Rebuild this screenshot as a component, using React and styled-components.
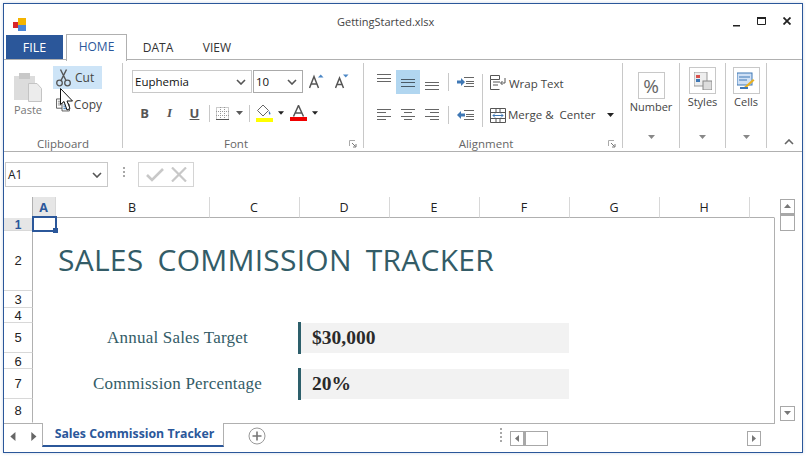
import React from 'react'
import styled, { createGlobalStyle } from 'styled-components'

const BLUE = '#2b579a'
const LINE = '#b0b0b0'
const ICON = '#5a5a5a'

const COLUMNS = [
  { name: 'A', active: true },
  { name: 'B' },
  { name: 'C' },
  { name: 'D' },
  { name: 'E' },
  { name: 'F' },
  { name: 'G' },
  { name: 'H' },
  { name: '' },
]

const ROWS = [
  { name: '1', narrow: true },
  { name: '2' },
  { name: '3', narrow: true },
  { name: '4', narrow: true },
  { name: '5' },
  { name: '6', narrow: true },
  { name: '7' },
  { name: '8' },
]

const GlobalStyle = createGlobalStyle`
  html, body {
    margin: 0;
    padding: 0;
    background: #fff;
  }
  body {
    width: 806px;
    height: 456px;
    overflow: hidden;
    font-family: "Open Sans", "Liberation Sans", sans-serif;
  }
  * {
    box-sizing: border-box;
  }
`

const Window = styled.div`
  position: relative;
  display: flex;
  flex-direction: column;
  width: 800px;
  height: 450px;
  margin: 3px;
  border: 1px solid ${BLUE};
  background: #fff;
  box-shadow: 0 0 3px rgba(43, 87, 154, 0.25);
`

const TitleBar = styled.div`
  display: flex;
  height: 31px;
  padding-left: 9px;
`

const AppIcon = styled.svg`
  margin-top: 14px;
  flex: none;
`

const Title = styled.div`
  margin: 10px 0 0 310px;
  font-size: 11px;
  line-height: 16px;
  color: #444;
`

const WindowButtons = styled.div`
  display: flex;
  margin-left: auto;
  padding: 13px 11px 0 0;
  gap: 17px;
`

const RibbonTabs = styled.div`
  display: flex;
  height: 25px;
  padding-left: 2px;
`

const FileTab = styled.div`
  width: 57px;
  height: 24px;
  margin-right: 3px;
  background: ${BLUE};
  color: #fff;
  font-size: 12.5px;
  line-height: 25px;
  text-align: center;
`

const RibbonTab = styled.div`
  position: relative;
  z-index: 1;
  width: ${p => p.$width}px;
  height: ${p => (p.$active ? 27 : 24)}px;
  margin-top: ${p => (p.$active ? -1 : 0)}px;
  border: 1px solid ${p => (p.$active ? LINE : 'transparent')};
  border-bottom: ${p => (p.$active ? 'none' : '1px solid transparent')};
  background: ${p => (p.$active ? '#fff' : 'transparent')};
  color: ${p => (p.$active ? BLUE : '#333')};
  font-size: 12px;
  line-height: 24px;
  text-align: center;
`

const Ribbon = styled.div`
  display: flex;
  height: 93px;
  margin-top: -1px;
  padding-top: 3px;
  border-top: 1px solid ${LINE};
  border-bottom: 1px solid ${LINE};
`

const Group = styled.div`
  display: flex;
  flex-direction: column;
  flex: none;
  width: ${p => p.$width}px;
  height: 85px;
  border-right: 1px solid #c8c8c8;
`

const GroupBody = styled.div`
  display: flex;
  flex: 1;
  min-height: 0;
  padding: ${p => p.$padding || '0'};
`

const GroupFooter = styled.div`
  display: flex;
  align-items: center;
  height: 16px;
  margin-bottom: -4px;
`

const GroupLabel = styled.div`
  flex: 1;
  font-size: 11.5px;
  line-height: 16px;
  color: #666;
  text-align: center;
`

const Launcher = styled.svg`
  flex: none;
  margin-right: 6px;
`

const PasteColumn = styled.div`
  display: flex;
  flex-direction: column;
  align-items: center;
  width: 28px;
  margin-right: 11px;
  padding-top: 10px;
`

const PasteLabel = styled.div`
  font-size: 11px;
  line-height: 16px;
  color: #777;
`

const ClipboardColumn = styled.div`
  display: flex;
  flex-direction: column;
  gap: 4px;
  padding-top: 3px;
`

const ClipboardButton = styled.div`
  display: flex;
  align-items: center;
  gap: 4px;
  width: 49px;
  height: 23px;
  padding-left: 3px;
  background: ${p => (p.$hover ? '#cde4f7' : 'transparent')};
  font-size: 12px;
  color: #444;
`

const Cursor = styled.svg`
  position: absolute;
  left: 52px;
  top: 80px;
  z-index: 3;
`

const Stack = styled.div`
  display: flex;
  flex-direction: column;
  gap: ${p => p.$gap}px;
`

const Row = styled.div`
  display: flex;
  align-items: center;
  height: ${p => p.$height}px;
`

const Combo = styled.div`
  display: flex;
  align-items: center;
  justify-content: space-between;
  width: ${p => p.$width}px;
  height: ${p => p.$height || 23}px;
  margin-right: 1px;
  padding: 0 5px 0 2px;
  border: 1px solid ${p => p.$border || '#c8c8c8'};
  background: #fff;
  font-size: 11.5px;
  color: #111;
`

const Slot = styled.div`
  display: flex;
  align-items: center;
  justify-content: center;
  flex: none;
  width: ${p => p.$width}px;
  height: ${p => p.$height || 20}px;
  background: ${p => (p.$selected ? '#b1d6f0' : 'transparent')};
`

const StyleLetter = styled.span`
  font-family: ${p => (p.$italic ? '"Liberation Serif", serif' : '"Open Sans", sans-serif')};
  font-size: 13px;
  font-weight: 700;
  font-style: ${p => (p.$italic ? 'italic' : 'normal')};
  text-decoration: ${p => (p.$under ? 'underline' : 'none')};
  color: #555;
`

const Separator = styled.div`
  flex: none;
  width: 1px;
  height: ${p => p.$height}px;
  margin: ${p => p.$margin || '0'};
  background: #c8c8c8;
`

const ActionRow = styled.div`
  display: flex;
  align-items: center;
  height: 24px;
  padding-left: 7px;
  font-size: 11.5px;
  color: #444;
  white-space: pre;
`

const ActionText = styled.span`
  margin: ${p => p.$margin};
`

const ActionCaret = styled.svg`
  margin-left: 11px;
`

const BigCommand = styled.div`
  display: flex;
  flex-direction: column;
  align-items: center;
  width: 100%;
  padding-top: ${p => p.$top}px;
  font-size: 11px;
  line-height: 16px;
  color: #444;
`

const BigButton = styled.div`
  display: flex;
  align-items: center;
  justify-content: center;
  width: 27px;
  height: 27px;
  border: 1px solid #c8c8c8;
  font-size: 19px;
  color: #666;
`

const CaretFooter = styled.div`
  display: flex;
  justify-content: center;
  height: 14px;
`

const Collapse = styled.div`
  display: flex;
  flex: 1;
  align-items: flex-end;
  justify-content: center;
  padding: 0 0 6px 8px;
`

const FormulaBar = styled.div`
  display: flex;
  align-items: flex-start;
  height: 45px;
  padding: 10px 0 0 1px;
`

const Dots = styled.div`
  display: flex;
  flex-direction: column;
  gap: 2px;
  flex: none;
  margin: ${p => p.$margin};
`

const Dot = styled.i`
  display: block;
  width: 2px;
  height: 2px;
  background: #a8a8a8;
`

const NameBoxText = styled.span`
  font-size: 12px;
  color: #222;
`

const ConfirmBox = styled.div`
  display: flex;
  align-items: center;
  justify-content: space-around;
  width: 56px;
  height: 25px;
  padding: 0 3px;
  border: 1px solid #d4d4d4;
`

const SheetArea = styled.div`
  display: flex;
  height: 226px;
`

const Grid = styled.div`
  display: grid;
  grid-template-columns: 29px 23px 154px 90px 90px 90px 90px 90px 90px 25px;
  grid-template-rows: 21px 13px 60px 17px 15px 30px 16px 30px 24px;
  width: 771px;
  border-right: 1px solid ${LINE};
`

const Corner = styled.div`
  border-right: 1px solid ${LINE};
`

const ColumnHeader = styled.div`
  display: flex;
  align-items: center;
  justify-content: center;
  padding-right: 1px;
  border-right: 1px solid ${p => (p.$last ? 'transparent' : '#d8d8d8')};
  border-bottom: 1px solid ${LINE};
  background: ${p => (p.$active ? '#e6e6e6' : '#fff')};
  color: ${p => (p.$active ? BLUE : '#222')};
  font-size: 12.5px;
  font-weight: ${p => (p.$active ? 700 : 400)};
`

const RowHeader = styled.div`
  grid-column: 1;
  grid-row: ${p => p.$row};
  display: flex;
  align-items: center;
  justify-content: center;
  padding-top: ${p => (p.$narrow ? 2 : 0)}px;
  border-right: 1px solid ${LINE};
  border-bottom: 1px solid ${p => (p.$last ? 'transparent' : '#d8d8d8')};
  background: ${p => (p.$active ? '#e6e6e6' : '#fff')};
  color: ${p => (p.$active ? BLUE : '#222')};
  font-family: "Liberation Sans", sans-serif;
  font-size: ${p => (p.$active ? 12 : 13)}px;
  font-weight: ${p => (p.$active ? 700 : 400)};
  line-height: 12px;
`

const ActiveCell = styled.div`
  position: relative;
  grid-column: 2;
  grid-row: 2;
`

const Selection = styled.div`
  position: absolute;
  inset: -2px -1px -1px -1px;
  border: 2px solid ${BLUE};
  pointer-events: none;
`

const FillHandle = styled.div`
  position: absolute;
  right: -3px;
  bottom: -3px;
  width: 5px;
  height: 5px;
  background: ${BLUE};
`

const SheetTitle = styled.div`
  grid-column: 3 / 11;
  grid-row: 3;
  display: flex;
  align-items: center;
  padding: 0 0 4px 2px;
  font-family: "Open Sans", sans-serif;
  font-size: 30px;
  letter-spacing: 0.25px;
  color: #335c67;
  word-spacing: 6px;
  white-space: nowrap;
`

const FieldLabel = styled.div`
  grid-column: 3 / 5;
  grid-row: ${p => p.$row};
  display: flex;
  align-items: center;
  justify-content: center;
  padding-right: 1px;
  font-family: "Liberation Serif", serif;
  font-size: 17px;
  letter-spacing: 0.2px;
  color: #335c67;
`

const FieldValue = styled.div`
  position: relative;
  grid-column: 5 / 8;
  grid-row: ${p => p.$row};
  display: flex;
  align-items: center;
  margin-right: 1px;
  padding-left: 12px;
  background: #f2f2f2;
  font-family: "Liberation Serif", serif;
  font-size: 19.5px;
  font-weight: 700;
  color: #2a2a2a;
  &::before {
    content: '';
    position: absolute;
    left: -2px;
    top: -1px;
    bottom: -1px;
    width: 3px;
    background: #2d5f6b;
  }
`

const VerticalScroll = styled.div`
  display: flex;
  flex-direction: column;
  align-items: center;
  flex: 1;
  padding: 2px 2px 2px 0;
`

const ScrollButton = styled.div`
  display: flex;
  align-items: center;
  justify-content: center;
  flex: none;
  width: ${p => p.$width || 15}px;
  height: ${p => p.$height || 15}px;
  border: 1px solid #a8a8a8;
  background: #fff;
`

const VerticalThumb = styled.div`
  width: 15px;
  height: 17px;
  margin-bottom: auto;
  border: 1px solid #a8a8a8;
  border-top-width: 2px;
`

const TabBar = styled.div`
  display: flex;
  height: 29px;
`

const TabNav = styled.div`
  display: flex;
  align-items: center;
  justify-content: space-between;
  width: 38px;
  height: 24px;
  padding: 2px 3px 0 5px;
  border-top: 1px solid ${LINE};
`

const SheetTab = styled.div`
  width: 182px;
  height: 24px;
  padding-left: 3px;
  border: 1px solid ${LINE};
  border-top: none;
  border-bottom: 2px solid ${BLUE};
  color: ${BLUE};
  font-size: 12.3px;
  font-weight: 700;
  line-height: 22px;
  text-align: center;
`

const TabStrip = styled.div`
  display: flex;
  align-items: flex-start;
  width: 551px;
  border-top: 1px solid ${LINE};
`

const AddSheet = styled.svg`
  margin: 3px 0 0 24px;
  flex: none;
`

const HorizontalScroll = styled.div`
  display: flex;
  flex: none;
  width: 251px;
  margin: 7px 0 0 8px;
`

const HorizontalThumb = styled.div`
  width: 24px;
  height: 15px;
  margin-right: auto;
  border: 1px solid #a8a8a8;
  border-left-width: 2px;
`

const Triangle = ({ dir, size = 7, color = ICON }) => {
  const points = {
    down: '0,1 7,1 3.5,5',
    up: '0,5 7,5 3.5,1',
    left: '5,0 5,7 1,3.5',
    right: '1,0 1,7 5,3.5',
  }
  return (
    <svg width={size} height={size} viewBox="0 0 7 7">
      <polygon points={points[dir]} fill={color} />
    </svg>
  )
}

const Chevron = () => (
  <svg width="10" height="6" viewBox="0 0 10 6">
    <path d="M1 1l4 4 4-4" fill="none" stroke="#555" strokeWidth="1.6" />
  </svg>
)

const Lines = ({ rows, color = '#666', width = 14, height = 14 }) => (
  <svg width={width} height={height} viewBox={`0 0 ${width} ${height}`}>
    {rows.map(([x, y, w]) => (
      <rect key={y} x={x} y={y} width={w} height="1" fill={color} />
    ))}
  </svg>
)

const DialogLauncher = () => (
  <Launcher width="8" height="8" viewBox="0 0 8 8">
    <path d="M0.5 6V0.5H6" fill="none" stroke="#aaa" />
    <path d="M3 3l3.5 3.5M7 4v3H4" fill="none" stroke="#777" />
  </Launcher>
)

const Indent = ({ flip }) => (
  <svg width="17" height="12" viewBox="0 0 17 12">
    <path d="M7 1.5h10M9 5.5h8M9 7.5h8M7 10.5h10" stroke="#666" />
    {flip
      ? <path d="M0 6l4-4v2.5h4v3H4V10z" fill="#3f78b5" />
      : <path d="M8 6L4 2v2.5H0v3h4V10z" fill="#3f78b5" />}
  </svg>
)

const Cell = ({ children, active, last }) => (
  <ColumnHeader $active={active} $last={last}>{children}</ColumnHeader>
)

const Clipboard = () => (
  <Group $width={119}>
    <GroupBody $padding="0 0 0 10px">
      <PasteColumn>
        <svg width="28" height="29" viewBox="0 0 28 29">
          <rect x="0" y="3" width="21" height="24" fill="#dcdcdc" />
          <rect x="5" y="0" width="11" height="6" fill="#c8c8c8" />
          <path d="M14.5 10.5H23l4.5 5v13h-13z" fill="#ececec" stroke="#c4c4c4" />
        </svg>
        <PasteLabel>Paste</PasteLabel>
      </PasteColumn>
      <ClipboardColumn>
        <ClipboardButton $hover>
          <svg width="15" height="18" viewBox="0 0 15 18">
            <circle cx="3.5" cy="14" r="2.8" fill="none" stroke="#555" strokeWidth="1.3" />
            <circle cx="11.5" cy="14" r="2.8" fill="none" stroke="#555" strokeWidth="1.3" />
            <path d="M5 11.5L10.5 0.5M10 11.5L4.5 0.5" stroke="#555" strokeWidth="1.4" />
          </svg>
          <span>Cut</span>
        </ClipboardButton>
        <ClipboardButton>
          <svg width="15" height="15" viewBox="0 0 15 15">
            <path d="M0.5 1.5h7v10h-7z" fill="#fff" stroke="#555" />
            <path d="M2 4h4M2 6h4M2 8h4" stroke="#888" />
            <path d="M6.5 4.5h5l3 3v7h-8z" fill="#fff" stroke="#555" />
            <path d="M8 8h5M8 10h5M8 12h5" stroke="#2f74b8" />
          </svg>
          <span>Copy</span>
        </ClipboardButton>
      </ClipboardColumn>
    </GroupBody>
    <GroupFooter>
      <GroupLabel>Clipboard</GroupLabel>
    </GroupFooter>
  </Group>
)

const Font = () => (
  <Group $width={241}>
    <GroupBody $padding="7px 0 0 9px">
      <Stack $gap={10}>
        <Row $height={23}>
          <Combo $width={120}>Euphemia<Chevron /></Combo>
          <Combo $width={50} $border="#aaa">10<Chevron /></Combo>
          <Slot $width={25}>
            <svg width="15" height="15" viewBox="0 0 15 15">
              <path d="M0.5 14L5 2.5 9.5 14M2 10h6" fill="none" stroke="#555" strokeWidth="1.5" />
              <polygon points="9,3.5 14.5,3.5 11.75,0.5" fill="#4a86c5" />
            </svg>
          </Slot>
          <Slot $width={25}>
            <svg width="14" height="15" viewBox="0 0 14 15">
              <path d="M0.5 14L4.5 4 8.5 14M2 10.5h5" fill="none" stroke="#555" strokeWidth="1.5" />
              <polygon points="8,0.5 13.5,0.5 10.75,3.5" fill="#4a86c5" />
            </svg>
          </Slot>
        </Row>
        <Row $height={20}>
          <Slot $width={25}><StyleLetter>B</StyleLetter></Slot>
          <Slot $width={25}><StyleLetter $italic>I</StyleLetter></Slot>
          <Slot $width={25}><StyleLetter $under>U</StyleLetter></Slot>
          <Separator $height={17} $margin="0 0 0 2px" />
          <Slot $width={24}>
            <svg width="13" height="13" viewBox="0 0 13 13">
              <path d="M0.5 0.5h12v12h-12zM4.5 0v13M8.5 0v13M0 4.5h13M0 8.5h13" fill="none" stroke="#999" strokeDasharray="1 1" />
              <path d="M0 12.5h13" stroke="#555" />
            </svg>
          </Slot>
          <Slot $width={10}><Triangle dir="down" /></Slot>
          <Separator $height={17} $margin="0 0 0 5px" />
          <Slot $width={28}>
            <svg width="17" height="18" viewBox="0 0 17 18">
              <path d="M7 1l5.5 5.5L7 12 1.5 6.5z" fill="#fff" stroke="#666" />
              <path d="M13 7c1.5 2 2 3 1 3.6S12.5 9 13 7z" fill="#3f78b5" />
              <rect x="0" y="14" width="17" height="4" fill="#ffff00" />
            </svg>
          </Slot>
          <Slot $width={6}><Triangle dir="down" color="#222" /></Slot>
          <Slot $width={28}>
            <svg width="17" height="16" viewBox="0 0 17 16">
              <path d="M3.5 11.5L8.5 0.5l5 11M5 8h7" fill="none" stroke="#555" strokeWidth="1.5" />
              <rect x="0" y="12" width="17" height="4" fill="#f00000" />
            </svg>
          </Slot>
          <Slot $width={6}><Triangle dir="down" color="#222" /></Slot>
        </Row>
      </Stack>
    </GroupBody>
    <GroupFooter>
      <GroupLabel>Font</GroupLabel>
      <DialogLauncher />
    </GroupFooter>
  </Group>
)

const Alignment = () => (
  <Group $width={259}>
    <GroupBody $padding="7px 0 0 8px">
      <Stack $gap={9}>
        <Row $height={24}>
          <Slot $width={24} $height={24}>
            <Lines rows={[[0, 1, 14], [0, 5, 14], [0, 8, 14]]} height={18} />
          </Slot>
          <Slot $width={24} $height={24} $selected>
            <Lines rows={[[0, 6, 14], [0, 9, 14], [0, 13, 14]]} height={18} color="#4a5a66" />
          </Slot>
          <Slot $width={24} $height={24}>
            <Lines rows={[[0, 9, 14], [0, 12, 14], [0, 16, 14]]} height={18} />
          </Slot>
          <Separator $height={18} $margin="0 0 0 4px" />
          <Slot $width={33} $height={24}><Indent /></Slot>
        </Row>
        <Row $height={24}>
          <Slot $width={24} $height={24}>
            <Lines rows={[[0, 1, 14], [0, 4, 9], [0, 8, 14], [0, 11, 9]]} />
          </Slot>
          <Slot $width={24} $height={24}>
            <Lines rows={[[0, 1, 14], [3, 4, 8], [0, 8, 14], [3, 11, 8]]} />
          </Slot>
          <Slot $width={24} $height={24}>
            <Lines rows={[[0, 1, 14], [5, 4, 9], [0, 8, 14], [5, 11, 9]]} />
          </Slot>
          <Separator $height={18} $margin="0 0 0 4px" />
          <Slot $width={33} $height={24}><Indent flip /></Slot>
        </Row>
      </Stack>
      <Separator $height={53} $margin="4px 0 0 0" />
      <Stack $gap={9}>
        <ActionRow>
          <svg width="16" height="15" viewBox="0 0 16 15">
            <path d="M0.5 0.5h9v4h-9zM0.5 4.5v10h9M3 7h7M3 10h5" fill="none" stroke="#555" />
            <path d="M15 3v5H11M12.5 6l-2 2 2 2" fill="none" stroke="#555" />
          </svg>
          <ActionText $margin="2px 0 0 3px">Wrap Text</ActionText>
        </ActionRow>
        <ActionRow>
          <svg width="16" height="15" viewBox="0 0 16 15">
            <path d="M0.5 0.5h15v14h-15zM0.5 4.5h15M0.5 10.5h15M6 0.5v4M10 0.5v4M6 10.5v4M10 10.5v4" fill="none" stroke="#555" />
            <path d="M3 7.5h10" stroke="#3f78b5" />
            <path d="M5 5.5l-2 2 2 2M11 5.5l2 2-2 2" fill="none" stroke="#3f78b5" />
          </svg>
          <ActionText $margin="0 0 2px 2px">Merge &amp;  Center</ActionText>
          <ActionCaret width="7" height="7" viewBox="0 0 7 7">
            <polygon points="0,1 7,1 3.5,5" fill="#222" />
          </ActionCaret>
        </ActionRow>
      </Stack>
    </GroupBody>
    <GroupFooter>
      <GroupLabel>Alignment</GroupLabel>
      <DialogLauncher />
    </GroupFooter>
  </Group>
)

const Command = ({ width, top, label, children }) => (
  <Group $width={width}>
    <GroupBody>
      <BigCommand $top={top}>
        <BigButton>{children}</BigButton>
        {label}
      </BigCommand>
    </GroupBody>
    <CaretFooter><Triangle dir="down" color="#888" /></CaretFooter>
  </Group>
)

const App = () => (
  <>
    <GlobalStyle />
    <Window>
      <TitleBar>
        <AppIcon width="14" height="13" viewBox="0 0 14 13">
          <rect x="0" y="4" width="5" height="6" fill="#d8262c" />
          <rect x="5" y="0" width="8" height="7" fill="#f4b400" />
          <rect x="5" y="7" width="8" height="6" fill="#4a86d8" />
        </AppIcon>
        <Title>GettingStarted.xlsx</Title>
        <WindowButtons>
          <svg width="7" height="10" viewBox="0 0 7 10">
            <rect x="0" y="8" width="7" height="1.5" fill="#222" />
          </svg>
          <svg width="9" height="8" viewBox="0 0 9 8">
            <path d="M0.5 1.5h8v6h-8z" fill="none" stroke="#222" />
            <rect x="0" y="0" width="9" height="2" fill="#222" />
          </svg>
          <svg width="8" height="8" viewBox="0 0 8 8">
            <path d="M0.5 0.5l7 7M7.5 0.5l-7 7" stroke="#222" strokeWidth="1.8" />
          </svg>
        </WindowButtons>
      </TitleBar>
      <RibbonTabs>
        <FileTab>FILE</FileTab>
        <RibbonTab $width={61} $active>HOME</RibbonTab>
        <RibbonTab $width={62}>DATA</RibbonTab>
        <RibbonTab $width={56}>VIEW</RibbonTab>
      </RibbonTabs>
      <Ribbon>
        <Clipboard />
        <Font />
        <Alignment />
        <Command width={57} top={9} label="Number">%</Command>
        <Command width={46} top={4} label="Styles">
          <svg width="18" height="18" viewBox="0 0 18 18">
            <rect x="0" y="0" width="13" height="14" fill="#eee" stroke="#999" />
            <rect x="2" y="3" width="4" height="3" fill="#d9534f" />
            <rect x="2" y="7" width="4" height="3" fill="#3f78b5" />
            <rect x="9" y="9" width="9" height="9" fill="#ddd" stroke="#888" />
          </svg>
        </Command>
        <Command width={41} top={4} label="Cells">
          <svg width="18" height="18" viewBox="0 0 18 18">
            <rect x="0" y="1" width="15" height="12" fill="#cfe0f5" stroke="#3f78b5" />
            <path d="M2 5h11M2 8h8" stroke="#3f78b5" />
            <path d="M6 16l10-9 1.5 1.5L8 17z" fill="#e8b020" />
            <path d="M3 16h8" stroke="#3f78b5" strokeWidth="2" />
          </svg>
        </Command>
        <Collapse>
          <svg width="10" height="6" viewBox="0 0 10 6">
            <path d="M1 5l4-4 4 4" fill="none" stroke="#666" strokeWidth="1.6" />
          </svg>
        </Collapse>
      </Ribbon>
      <FormulaBar>
        <Combo $width={103} $height={25}>
          <NameBoxText>A1</NameBoxText>
          <Chevron />
        </Combo>
        <Dots $margin="5px 13px 0 14px">
          <Dot /><Dot /><Dot />
        </Dots>
        <ConfirmBox>
          <svg width="18" height="14" viewBox="0 0 18 14">
            <path d="M1 7l5 5L17 1" fill="none" stroke="#c8c8c8" strokeWidth="2.6" />
          </svg>
          <svg width="16" height="15" viewBox="0 0 16 15">
            <path d="M1 0.5l14 14M15 0.5l-14 14" stroke="#c8c8c8" strokeWidth="2.2" />
          </svg>
        </ConfirmBox>
      </FormulaBar>
      <SheetArea>
        <Grid>
          <Corner />
          {COLUMNS.map(col => (
            <Cell key={col.name || 'rest'} active={col.active} last={!col.name}>{col.name}</Cell>
          ))}
          {ROWS.map((row, i) => (
            <RowHeader
              key={row.name}
              $row={i + 2}
              $narrow={row.narrow}
              $active={i === 0}
              $last={i === ROWS.length - 1}
            >
              {row.name}
            </RowHeader>
          ))}
          <ActiveCell>
            <Selection><FillHandle /></Selection>
          </ActiveCell>
          <SheetTitle>SALES COMMISSION TRACKER</SheetTitle>
          <FieldLabel $row={6}>Annual Sales Target</FieldLabel>
          <FieldValue $row={6}>$30,000</FieldValue>
          <FieldLabel $row={8}>Commission Percentage</FieldLabel>
          <FieldValue $row={8}>20%</FieldValue>
        </Grid>
        <VerticalScroll>
          <ScrollButton><Triangle dir="up" color="#777" /></ScrollButton>
          <VerticalThumb />
          <ScrollButton><Triangle dir="down" color="#777" /></ScrollButton>
        </VerticalScroll>
      </SheetArea>
      <TabBar>
        <TabNav>
          <Triangle dir="left" size={9} color="#666" />
          <Triangle dir="right" size={9} color="#666" />
        </TabNav>
        <SheetTab>Sales Commission Tracker</SheetTab>
        <TabStrip>
          <AddSheet width="18" height="18" viewBox="0 0 18 18">
            <circle cx="9" cy="9" r="8" fill="none" stroke="#999" />
            <path d="M9 4.5v9M4.5 9h9" stroke="#777" strokeWidth="1.6" />
          </AddSheet>
          <Dots $margin="4px 0 0 234px">
            <Dot /><Dot /><Dot /><Dot />
          </Dots>
          <HorizontalScroll>
            <ScrollButton $width={14}><Triangle dir="left" color="#777" /></ScrollButton>
            <HorizontalThumb />
            <ScrollButton $width={14}><Triangle dir="right" color="#777" /></ScrollButton>
          </HorizontalScroll>
        </TabStrip>
      </TabBar>
      <Cursor width="18" height="30" viewBox="0 0 18 30">
        <path d="M4.5 4.5V20.5L8 17.5 11 26 14 24.5 11 17H16.5z" fill="#fff" stroke="#111" />
      </Cursor>
    </Window>
  </>
)

export default App
